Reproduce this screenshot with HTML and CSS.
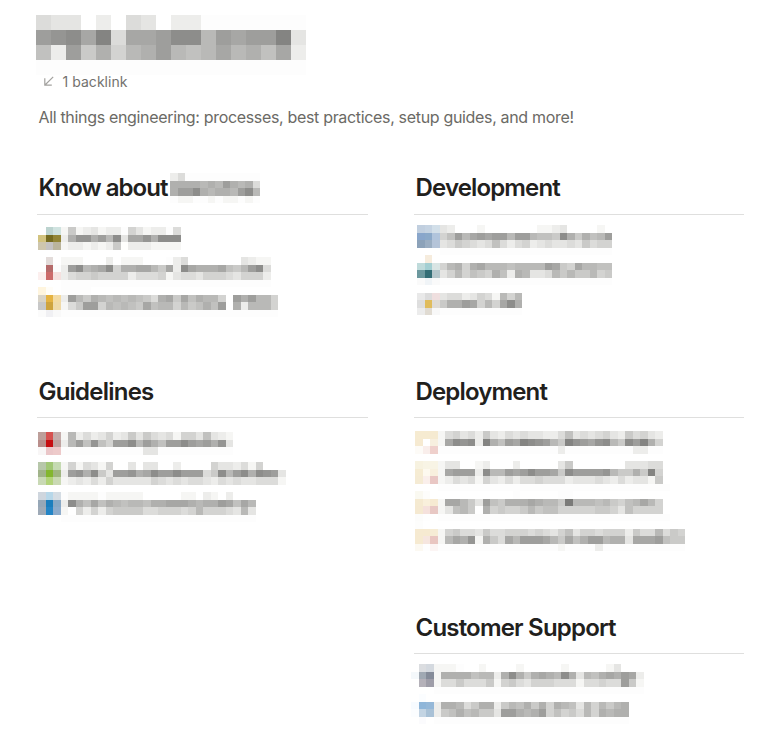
FILE: index.html
```html
<!DOCTYPE html>
<html lang="en">
<head>
<meta charset="utf-8">
<title>Engineering</title>
<link rel="stylesheet" href="styles.css">
</head>
<body>
<header class="page-header">
  <div class="mosaic title" data-mosaic="title"></div>
  <div class="backlink">
    <svg class="arrow" viewBox="0 0 10 10" width="10" height="10"><path d="M9.2.8 1 9M.8 2.2V9.2H7.8"/></svg>
    <span>1 backlink</span>
  </div>
  <p class="description">All things engineering: processes, best practices, setup guides, and more!</p>
</header>
<main class="sections">
  <section class="know"><h2>Know about<span class="mosaic name" data-mosaic="name"></span></h2><div class="mosaic list" data-mosaic="know"></div></section>
  <section class="development"><h2>Development</h2><div class="mosaic list" data-mosaic="development"></div></section>
  <section class="guidelines"><h2>Guidelines</h2><div class="mosaic list" data-mosaic="guidelines"></div></section>
  <section class="deployment"><h2>Deployment</h2><div class="mosaic list" data-mosaic="deployment"></div></section>
  <section class="support"><h2>Customer Support</h2><div class="mosaic list" data-mosaic="support"></div></section>
</main>
<script src="mosaic.js"></script>
</body>
</html>
```
FILE: styles.css
```css
* { box-sizing: border-box; }
body {
  margin: 0;
  width: 784px;
  height: 733px;
  overflow: hidden;
  background: #fff;
  color: #21201c;
  font-family: Inter, "Liberation Sans", sans-serif;
}
.mosaic svg { display: block; overflow: visible; shape-rendering: crispEdges; }
.page-header { height: 172px; padding: 15px 0 0 36px; }
.title { height: 56px; }
.backlink {
  display: flex;
  align-items: center;
  gap: 8.5px;
  height: 20px;
  padding-left: 8px;
  font-size: 14px;
  letter-spacing: 0.04px;
  color: #73726e;
  white-space: nowrap;
}
.arrow { fill: none; stroke: #a3a29f; stroke-width: 1.2; }
.description {
  margin: 14px 0 0 2.5px;
  font-size: 16px;
  line-height: 24px;
  letter-spacing: -0.33px;
  color: #6b6a65;
  white-space: nowrap;
}
.sections {
  display: grid;
  grid-template-columns: 331px 330px;
  grid-template-rows: 203px 236px 119px;
  column-gap: 46px;
  padding-left: 37px;
}
h2 {
  display: flex;
  height: 43px;
  margin: 0;
  padding-left: 1.5px;
  border-bottom: 1px solid #dfdfde;
  font-size: 24px;
  font-weight: 600;
  line-height: 31px;
  letter-spacing: -0.85px;
  white-space: nowrap;
}
.know h2 { letter-spacing: -0.95px; }
.guidelines h2 { letter-spacing: -0.78px; }
.guidelines h2, .deployment h2, .support h2 { line-height: 33px; }
.support h2 { letter-spacing: -0.8px; }
.name { margin: 1px 0 0 2.5px; }
.know .list { margin: 12.3px 0 0 1.3px; }
.development .list { margin: 10.3px 0 0 3.3px; }
.guidelines .list { margin: 14px 0 0 1.3px; }
.deployment .list { margin: 13px 0 0 1px; }
.support { grid-column: 2; }
.support .list { margin: 10px 0 0 -2.7px; }
```
FILE: mosaic.js
```js
// Redacted text and icons, drawn as tiles. Hex digits are grey levels,
// "-" is the faintest tone and "." is an empty tile.
const faint = "-".repeat(40);
const mosaics = {
  title: { size: 15, items: [{ rows: [
    "433.2.43.22-------",
    "bcdae4aabdd8babbe3",
    "72b69589b878a897a2",
    "------------------"] }] },
  name: { size: 7.5, items: [{ rows: [
    "24----------", "9999898b9894", "9bbd98998bd8", "-11--1-11-1-"] }] },
  know: { size: 7.5, items: [
    { icon: ["fff,bcd3cf,d0e3e0", "d2c37f,756b20,928536", "cec6ae,c4c2c2,bab49c"],
      rows: ["16123122-53122-4", "29cc9b8d3aac9ddd", "1221212602221111"] },
    { icon: ["fff,e3dcda,fff", "fff,b56a6a,fcfcfc", "fcefee,cc6a6a,f5e1df"],
      rows: ["111...2.111...-24.......3211", "2bd89ad599aa86a2da999a768bd4", "2455655552444513443555435552", faint.slice(0, 28)] },
    { icon: ["fff5de,fffdf8,fff", "d9d4c8,e5b342,f3dba4", "c8c8c8,cea33e,efdaa9", "fbfbfb,f0f0f3,f9f9f9"],
      rows: ["----", "2b869878787649a6a79885.b9b885", "146bb587876a788586797b.928885", faint.slice(0, 29)] }] },
  development: { size: 7.5, items: [
    { icon: ["c1cfdf,c5d3e2,d2dfe9", "89a6cb,8ba9c9,b0c4dc", "8ca2b9,9baec2,b5c4d8"],
      rows: ["32...1.......1123....1.", "57b8ababb8bb8776d96978b", "34654347424523433436455", faint.slice(0, 23)] },
    { icon: ["fff,f6ecdd,fff", "bfdbdb,a3cfd2,d9e5e4", "6c989e,336d75,b5c6cb", "fafafa,f0f4f7,fafafa"],
      rows: ["", "58959a88878888ba65a8877", "35857659729833486866856", faint.slice(0, 23)] },
    { icon: ["fff,fff,fff", "e9e9e9,dcdcdc,efdfdf", "dedede,e0bc5c,dfdbd5", "ececec,e0dbd2,f8f8f8"],
      rows: ["", "34423541858", "699ba585ad9", faint.slice(0, 11)] }] },
  guidelines: { size: 7.5, items: [
    { icon: ["bd9f9a,d65250,c4adab", "b98e8b,c60d10,bfa29f", "f8f6f6,eac6c8,edcaca"],
      rows: ["18242352363643415537321", "28b7c75bbd8b97bbdbab9c3", "-----------33----------"] },
    { icon: ["b7c7aa,a1c775,c5dab2", "a1b38a,83b62e,9fb57f", "c9d9b5,b2d379,cad9b4"],
      rows: ["1514315..3.33..2....5332415", "2bc9d63bbc9adbbdbbb46d8bd9dcb3", "123242533333543434432434334441"] },
    { icon: ["cfd6de,b7d7e9,d5dde4", "96a7b7,1c7ebd,88a8c5", "9eaab7,2485c6,8dabcb"],
      rows: ["-1111-11111.....11.21.2.", "2d97a798788799aaa9899ba7a8", "1.525256666445554585554383", faint.slice(0, 26)] }] },
  deployment: { size: 7.5, items: [
    { icon: ["f6ebd1,f6ebd1,f5ead1", "f6ead1,fff,f7efdf", "fdfbf7,f9eeeb,efd0cc"],
      rows: ["145342632434332247343453264532", "1adcd2e97baedcb86ecbacd86dbe95", "----------------2---------22--"] },
    { icon: ["f7f2e0,f8f4e5,f8f4e5", "f6ecd3,fdf9ef,f8f0de", "f5ebd4,faefeb,e9c7c4"],
      rows: ["133..12...2.....36.......33344", "1abbb2d88babdbba6dbbbbc86696e5", "124341532424454442333432423316", faint.slice(0, 31)] },
    { icon: ["faf9f1,fdfdfb,fff", "f5ead1,f9f0dc,f6ead2", "f5e9d1,f5e1dc,e8c8c4", "fcfcfb,fefefe,fff"],
      rows: ["..........-.....--", "1aa863b76999a9886f888786578a85", "13786.956556867755555665375555", faint.slice(0, 31)] },
    { icon: ["fdfdfc,fff,fff", "f6ead1,f6ead1,f6ecd5", "f6ead1,f6e6df,e9c6c1", "fcf9f2,fefefe,fcf5f4"],
      rows: ["", "156443644555454357355455526448465", "18a9c1964a8bbba86a79bb8993aaab766", "----------------1----2-----------"] }] },
  support: { size: 7.5, items: [
    { icon: ["fff,dbdde0,d4d9df", "f4f8fb,a0a9b3,858c99", "fff,b4b1b9,9e9da8"],
      rows: ["111-..1....1.....1.....13", "1999978829d969a98d93879a9ba2", "1446444615643555444144544b61", faint.slice(0, 28)] },
    { icon: ["fff,fbfdff,fff", "f7fbff,8fb6d9,95b8d8", "fbfdff,c3d4e3,a9c1d6", "fff,fbfbfd,fff"],
      rows: ["", "29984699268796959873858689", "267978663bb989b57564859899", faint.slice(0, 26)] }] }
};

const NS = "http://www.w3.org/2000/svg";
function tone(c) {
  if (c === ".") return null;
  if (c === "-") return "#fdfdfd";
  const v = Math.round(255 - parseInt(c, 16) * 8.8);
  return `rgb(${v},${v},${v - 2})`;
}
document.querySelectorAll("[data-mosaic]").forEach(host => {
  const { size, items } = mosaics[host.dataset.mosaic];
  const svg = document.createElementNS(NS, "svg");
  let cols = 0;
  const tile = (x, y, fill) => {
    if (!fill) return;
    cols = Math.max(cols, x + 1);
    const r = document.createElementNS(NS, "rect");
    r.setAttribute("x", x * size);
    r.setAttribute("y", y * size);
    r.setAttribute("width", size);
    r.setAttribute("height", size);
    r.setAttribute("fill", fill);
    svg.append(r);
  };
  items.forEach((item, i) => {
    (item.icon || []).forEach((row, y) =>
      row.split(",").forEach((c, x) => tile(x, i * 4 + y, "#" + c)));
    item.rows.forEach((row, y) =>
      [...row].forEach((c, x) => tile(x + (item.icon ? 3 : 0), i * 4 + y, tone(c))));
  });
  svg.setAttribute("width", cols * size);
  svg.setAttribute("height", items.length * 4 * size);
  host.append(svg);
});
```
